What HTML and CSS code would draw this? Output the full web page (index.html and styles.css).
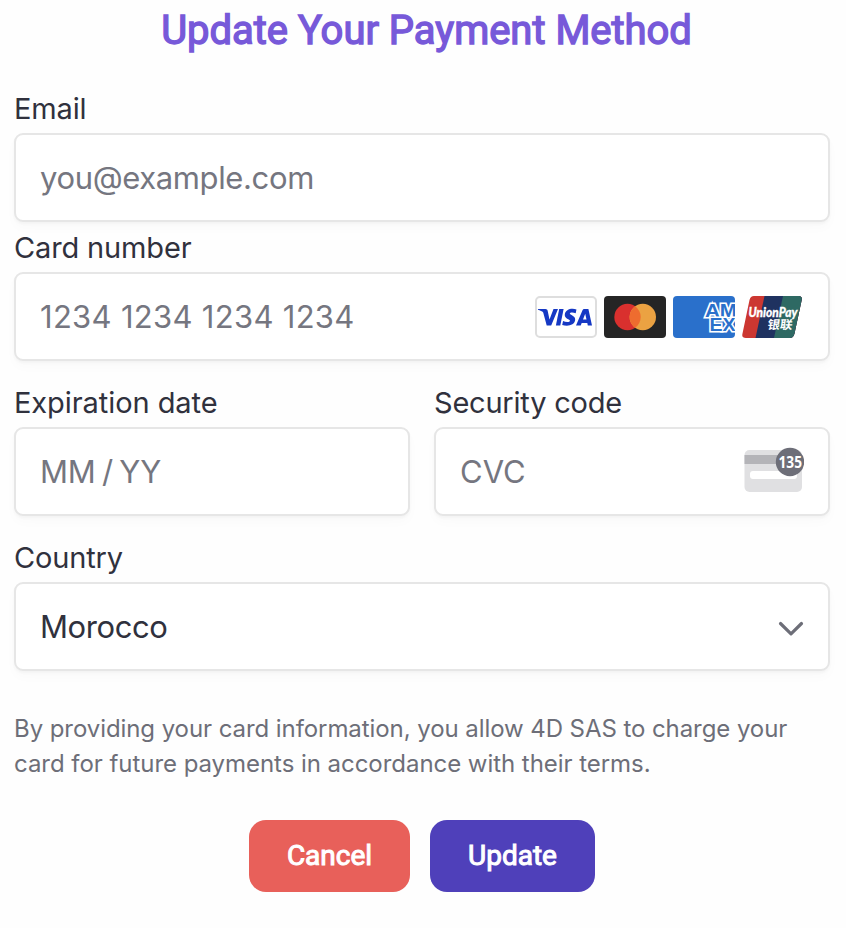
FILE: index.html
```html
<!DOCTYPE html>
<html lang="en">
<head>
<meta charset="utf-8">
<title>Update Your Payment Method</title>
<link rel="stylesheet" href="styles.css">
</head>
<body>
<main class="payment">
  <h1 class="title">Update Your Payment Method</h1>
  <form class="form">
    <div class="field">
      <label class="label label-email" for="email">Email</label>
      <input class="box ph-email" id="email" type="text" placeholder="you@example.com">
    </div>
    <div class="field field-card">
      <label class="label label-card" for="card">Card number</label>
      <div class="box">
        <input class="bare ph-card" id="card" type="text" placeholder="1234 1234 1234 1234">
        <div class="brands">
          <svg class="brand" viewBox="0 0 62 42">
            <rect x="1" y="1" width="60" height="40" rx="4" fill="#fff" stroke="#dedede" stroke-width="2"/>
            <g fill="#1538c4">
              <path d="M3 13h7.500c1.100 0 2 .7 2.200 1.900l1.800 8.600 4-10.500h4.500L16.200 29.500h-4.500L8.200 16.500C7.300 15.300 5 14.400 2.900 13.800Z"/>
              <path d="M24.200 13h4.400l-3.300 16.500h-4.400Z"/>
              <path transform="translate(-3.900 0) scale(1.080 1)" d="M42 13.500l-.7 3.700c-2-1-5.500-1.200-5.500.4 0 1.700 5.500 2 5 6.500-.5 5.200-7 6.600-12 4.800l.8-3.900c2.300 1.400 6.300 1.500 6.400-.2.100-1.700-5.300-2-4.800-6.400.5-5.200 6.600-6.700 10.800-4.900Z"/>
              <path fill-rule="evenodd" d="M49.500 13h3.900L57 29.500h-4.200l-.5-2.500h-5.600l-1 2.500h-4.700l6.500-15.200c.4-.8 1.100-1.300 2-1.300Zm.7 4.700-2.200 5.900h3.500Z"/>
            </g>
          </svg>
          <svg class="brand" viewBox="0 0 62 42">
            <rect width="62" height="42" rx="4" fill="#252525"/>
            <circle cx="23.500" cy="21" r="13.200" fill="#d9302e"/>
            <circle cx="38.800" cy="21" r="13.200" fill="#eba242"/>
            <path d="M31.150 10.240a13.200 13.200 0 0 1 0 21.520a13.200 13.200 0 0 1 0-21.520Z" fill="#ee6c2f"/>
          </svg>
          <svg class="brand" viewBox="0 0 62 42">
            <defs><clipPath id="amex-clip"><rect width="62" height="42" rx="4"/></clipPath></defs>
            <g clip-path="url(#amex-clip)">
              <rect width="62" height="42" fill="#2a70cb"/>
              <g class="amex">
                <text x="32" y="20.500" textLength="32" lengthAdjust="spacingAndGlyphs">AM</text>
                <text x="36.500" y="34.500" textLength="26" lengthAdjust="spacingAndGlyphs">EX</text>
              </g>
            </g>
          </svg>
          <svg class="brand" viewBox="0 0 62 42">
            <defs><clipPath id="up-clip"><path d="M12 0h44.500q4 0 3.200 4L52.500 37.500q-1 4.500-5 4.500H4Q-.500 42 .400 38L7.500 4q.9-4 4.500-4Z"/></clipPath></defs>
            <g clip-path="url(#up-clip)">
              <rect width="62" height="42" fill="#cc3731"/>
              <path d="M22.500 0H62v42H13.500Z" fill="#1f3260"/>
              <path d="M41 0h21v42H32Z" fill="#2e6963"/>
            </g>
            <text class="up-latin" x="6.500" y="20.500" textLength="49" lengthAdjust="spacingAndGlyphs">UnionPay</text>
            <text class="up-cjk" transform="translate(25 32.500) skewX(-8)" textLength="25" lengthAdjust="spacingAndGlyphs">银联</text>
          </svg>
        </div>
      </div>
    </div>
    <div class="row">
      <div class="field">
        <label class="label label-exp" for="exp">Expiration date</label>
        <input class="box ph-exp" id="exp" type="text" placeholder="MM / YY">
      </div>
      <div class="field">
        <label class="label label-cvc" for="cvc">Security code</label>
        <div class="box">
          <input class="bare ph-cvc" id="cvc" type="text" placeholder="CVC">
          <svg class="cvc-icon" viewBox="0 0 60 46">
            <rect x=".5" y="3" width="57.500" height="42" rx="5" fill="#e0e0e2"/>
            <rect x=".5" y="8" width="57.500" height="9" fill="#b4b4b8"/>
            <rect x="6" y="24" width="47" height="8" rx="3" fill="#fff"/>
            <circle cx="46" cy="15" r="14.200" fill="#6d6e78"/>
            <text class="cvc-digits" x="34.500" y="20.500" textLength="23.500" lengthAdjust="spacingAndGlyphs">135</text>
          </svg>
        </div>
      </div>
    </div>
    <div class="field">
      <span class="label label-country">Country</span>
      <div class="box select">
        <span class="value">Morocco</span>
        <svg class="chevron" viewBox="0 0 26 16"><path d="M2.500 2.500 13 12.800 23.500 2.500"/></svg>
      </div>
    </div>
    <p class="terms"><span class="line-1">By providing your card information, you allow 4D SAS to charge your</span><br><span class="line-2">card for future payments in accordance with their terms.</span></p>
    <div class="actions">
      <button class="btn cancel" type="button">Cancel</button>
      <button class="btn update" type="button">Update</button>
    </div>
  </form>
</main>
</body>
</html>
```
FILE: styles.css
```css
* { box-sizing: border-box; }
body { margin: 0; background: #fefefe; font-family: Inter, sans-serif; color: #30313d; }
.payment { padding: 7px 16px 0 14px; }
.title {
  margin: 0 0 37px 9px; font: 400 40px/48px Roboto, sans-serif; text-align: center;
  color: #7759d9; -webkit-text-stroke: 1.4px #7759d9; letter-spacing: -0.03px; white-space: nowrap;
}
.form { display: flex; flex-direction: column; gap: 25px; }
.field { display: flex; flex-direction: column; flex: 1; min-width: 0; }
.field-card { margin-top: -16px; }
.row { display: flex; gap: 24px; }
.label { font-size: 29px; line-height: 34px; margin-bottom: 7px; white-space: nowrap; letter-spacing: -0.15px; }
.label-exp { letter-spacing: -0.07px; }
.label-cvc { letter-spacing: -0.22px; }
.box {
  display: flex; align-items: center; width: 100%; height: 89px; padding: 0 24px;
  border: 2px solid #e6e6e6; border-radius: 9px; background: #fff;
  box-shadow: 0 2px 3px rgba(0, 0, 0, .03), 0 6px 12px rgba(0, 0, 0, .02);
}
input { font: 400 31px/40px Inter, sans-serif; outline: 0; color: #30313d; }
input::placeholder { color: #757680; opacity: 1; }
.ph-email { letter-spacing: -0.37px; }
.ph-card { letter-spacing: 0.3px; }
.ph-exp { word-spacing: -2px; letter-spacing: -0.25px; }
.bare { flex: 1; min-width: 0; padding: 0; border: 0; background: none; }
.brands { display: flex; gap: 7px; }
.brand { width: 62px; height: 42px; flex: none; }
.amex { font: 700 17.5px "Liberation Sans", sans-serif; fill: #2a70cb; stroke: #fff; stroke-width: 3px; paint-order: stroke; }
.up-latin { font: italic 900 13px Lato, sans-serif; fill: #fff; stroke: #fff; stroke-width: .3px; }
.up-cjk { font: 700 12px "Noto Sans CJK SC", sans-serif; fill: #fff; }
.cvc-icon { width: 60px; height: 46px; flex: none; margin-bottom: 4px; }
.cvc-digits { font: 700 15.5px "Noto Sans", sans-serif; fill: #fff; }
.select { justify-content: space-between; }
.value { font-size: 31px; line-height: 40px; letter-spacing: -0.42px; }
.chevron { width: 26px; height: 16px; margin-top: 4px; fill: none; stroke: #6d6e78; stroke-width: 3.2; stroke-linecap: round; stroke-linejoin: round; }
.terms { margin: 15px 0 0; font-size: 24px; line-height: 35px; color: #6d6e78; white-space: nowrap; }
.line-1 { letter-spacing: -0.075px; }
.line-2 { letter-spacing: -0.045px; }
.actions { display: flex; justify-content: center; gap: 20px; margin-top: 14px; }
.btn {
  height: 72px; padding: 0; border: 0; border-radius: 17px; color: #fff;
  font: 400 28px/32px Roboto, sans-serif; -webkit-text-stroke: 1px #fff;
}
.cancel { width: 161px; background: #e8605a; }
.update { width: 165px; background: #4f40ba; }
```
